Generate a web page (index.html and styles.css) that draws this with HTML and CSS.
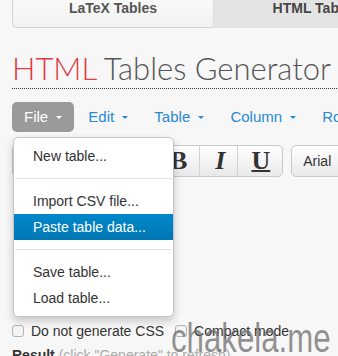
FILE: index.html
```html
<!DOCTYPE html>
<html>
<head>
    <meta charset="UTF-8">
    <title>HTML Tables Generator</title>
    <link rel="stylesheet" href="styles.css">
</head>
<body>
    <div id="page">
        <div class="tabs">
            <a class="tab first">LaTeX Tables</a>
            <a class="tab on">HTML Tables</a>
            <a class="tab">Markdown Tables</a>
        </div>
        <h1 class="title"><span class="red">HTML</span> Tables Generator</h1>

        <div class="menu">
            <div class="item open">
                File <i class="caret"></i>
                <ul class="dropdown">
                    <li>New table...</li>
                    <li class="divider"></li>
                    <li>Import CSV file...</li>
                    <li class="hover">Paste table data...</li>
                    <li class="divider"></li>
                    <li>Save table...</li>
                    <li>Load table...</li>
                </ul>
            </div>
            <div class="item">Edit <i class="caret"></i></div>
            <div class="item">Table <i class="caret"></i></div>
            <div class="item">Column <i class="caret"></i></div>
            <div class="item">Row <i class="caret"></i></div>
        </div>

        <div class="toolbar">
            <div class="group hidden-under">
                <span class="btn">&#8630;</span><span class="btn">&#8631;</span>
            </div>
            <div class="group">
                <span class="btn b">B</span><span class="btn i">I</span><span class="btn u">U</span>
            </div>
            <div class="group">
                <span class="btn font">Arial</span>
            </div>
        </div>

        <div class="editor"></div>

        <div class="options">
            <label><span class="check"></span>Do not generate CSS</label>
            <label><span class="check"></span>Compact mode</label>
        </div>
        <div class="result"><b>Result</b> <span>(click "Generate" to refresh)</span></div>
    </div>
    <div class="mark">chakela.me</div>
</body>
</html>
```
FILE: styles.css
```css
*{ margin: 0; padding: 0; box-sizing: border-box;}
li{ list-style: none;}
html, body{ background: #f7f7f7; overflow: hidden;}
body{ font-family: "Liberation Sans", Arial, sans-serif; color: #333; position: relative; height: 356px;}
#page{
    width: 900px;
    padding: 0 11px 0 12px;
}
.tabs{
    display: flex;
    height: 28px;
}
.tab{
    width: 202px;
    font-size: 14px;
    line-height: 16px;
    font-weight: bold;
    text-align: center;
    color: #555;
    background: linear-gradient(#f9f9f9, #f1f1f1);
    border-bottom: 1px solid #d4d4d4;
}
.tab.first{
    border-left: 1px solid #d4d4d4;
    border-right: 1px solid #ddd;
    border-radius: 0 0 0 5px;
}
.tab.on{
    width: 203px;
    background: #e4e4e4;
    color: #444;
    border-bottom-color: #e4e4e4;
}
.title{
    margin-top: 22px;
    padding-bottom: 2px;
    border-bottom: 1px dotted #333;
    font-family: Lato, sans-serif;
    font-weight: 300;
    font-size: 31px;
    line-height: 36px;
    color: #555;
}
.title .red{ color: #e03a44;}
.menu{
    display: flex;
    margin-top: 13px;
    font-size: 15px;
}
.menu .item{
    position: relative;
    height: 30px;
    line-height: 30px;
    padding: 0 12px;
    margin-right: 2px;
    color: #288ad6;
    border-radius: 5px;
}
.menu .item.open{
    background: #9a9a9a;
    color: #fff;
}
.caret{
    display: inline-block;
    vertical-align: middle;
    margin-left: 4px;
    margin-top: -2px;
    border-top: 3px solid currentColor;
    border-left: 3px solid transparent;
    border-right: 3px solid transparent;
}
.dropdown{
    position: absolute;
    z-index: 5;
    left: 1px;
    top: 35px;
    width: 161px;
    padding: 5px 0;
    background: #fff;
    border: 1px solid #c4c4c4;
    border-radius: 5px;
    box-shadow: 0 4px 9px rgba(0,0,0,.2);
    font-size: 14px;
    line-height: 26px;
    color: #333;
}
.dropdown li{
    padding: 0 19px;
    white-space: nowrap;
}
.dropdown li.hover{
    color: #fff;
    background: linear-gradient(#0088cc, #0077b3);
}
.dropdown li.divider{
    height: 1px;
    margin: 9px 1px;
    background: #e2e2e2;
}
.toolbar{
    display: flex;
    gap: 8px;
    margin-top: 13px;
}
.group{
    display: flex;
    height: 32px;
    border: 1px solid #c8c8c8;
    border-radius: 5px;
    background: linear-gradient(#fff, #e9e9e9);
}
.group .btn{
    padding: 0 13px;
    line-height: 30px;
    border-left: 1px solid #d2d2d2;
    font-family: "Liberation Serif", serif;
    font-weight: bold;
    font-size: 26px;
    color: #333;
}
.group .btn:first-child{ border-left: none;}
.hidden-under{ width: 135px;}
.btn.b{ padding: 0 12px 0 14px;}
.btn.i{ font-style: italic; padding: 0 12px 0 15px;}
.btn.u{ padding: 0 12px 0 13px; text-decoration: underline; text-decoration-thickness: 2px;}
.btn.font{
    font-family: "Liberation Sans", sans-serif;
    font-weight: normal;
    font-size: 14px;
    padding: 0 11px;
    width: 60px;
}
.editor{ height: 144px;}
.options{
    display: flex;
    gap: 11px;
    font-size: 14px;
    line-height: 20px;
}
.options label{
    display: flex;
    align-items: center;
}
.check{
    width: 12px;
    height: 12px;
    margin-right: 7px;
    border: 1px solid #b3b3b3;
    border-radius: 3px;
    background: #f4f4f4;
}
.result{
    margin-top: 4px;
    font-size: 14px;
    line-height: 20px;
}
.result span{ color: #aaa;}
.mark{
    position: absolute;
    left: 171px;
    top: 318px;
    font-family: "Liberation Sans", sans-serif;
    font-size: 40px;
    line-height: 40px;
    transform: scaleX(.78);
    transform-origin: left top;
    color: rgba(105,105,105,.72);
    white-space: nowrap;
}
```
